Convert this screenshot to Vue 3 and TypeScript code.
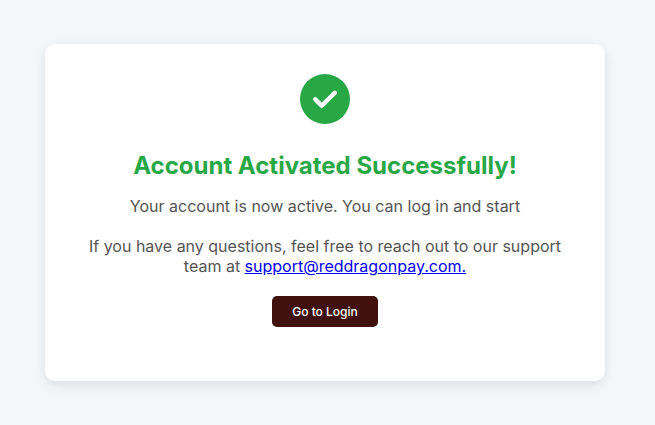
<script setup lang="ts">
const email: string = 'support@reddragonpay.com.'
</script>

<template>
  <main class="page">
    <section class="card">
      <svg class="icon" viewBox="0 0 50 50" aria-hidden="true">
        <circle cx="25" cy="25" r="25" fill="#28a745" />
        <path d="M15.3 25.4 L21.7 31.8 L34.8 18.8" fill="none" stroke="#fff" stroke-width="4.4" stroke-linecap="round" stroke-linejoin="round" />
      </svg>
      <h1>Account Activated Successfully!</h1>
      <p>Your account is now active. You can log in and start</p>
      <p>If you have any questions, feel free to reach out to our support team at <a href="#">{{ email }}</a></p>
      <button type="button">Go to Login</button>
    </section>
  </main>
</template>

<style>
body {
  margin: 0;
  background: #f3f7f8;
}
</style>

<style scoped>
.page {
  height: 425px;
  box-sizing: border-box;
  padding: 44px 50px 44px 45px;
  font-family: Inter, sans-serif;
}
.card {
  height: 337px;
  box-sizing: border-box;
  padding: 30px 40px;
  border-radius: 10px;
  background: #fff;
  box-shadow: 0 4px 12px rgba(0, 0, 0, 0.1);
  text-align: center;
}
.icon {
  display: block;
  width: 50px;
  height: 50px;
  margin: 0 auto 27px;
}
h1 {
  margin: 0 0 15px;
  color: #28a745;
  font-size: 24px;
  line-height: 30px;
  font-weight: 700;
}
p {
  margin: 0 0 20px;
  color: #555;
  font-size: 16px;
  line-height: 20px;
}
a {
  color: #0000ee;
}
button {
  display: inline-block;
  width: 106px;
  height: 31px;
  padding: 0;
  border: 0;
  border-radius: 5px;
  background: #41120d;
  color: #fff;
  font: 500 12px/15px Inter, sans-serif;
}
</style>
